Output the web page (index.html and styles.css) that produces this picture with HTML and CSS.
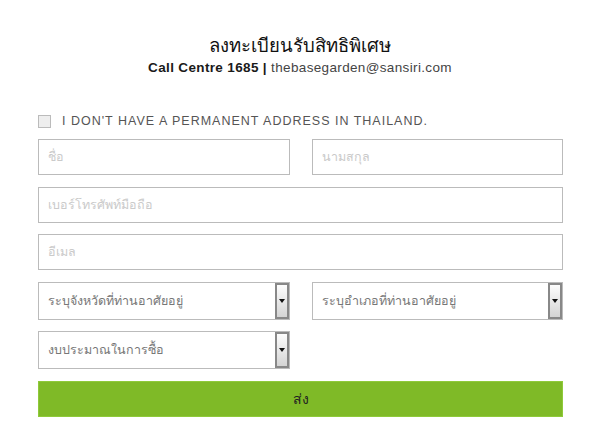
FILE: index.html
```html
<!DOCTYPE html>
<html lang="th">
<head>
<meta charset="utf-8">
<link rel="stylesheet" href="styles.css">
</head>
<body>
<div class="page">
  <header class="head">
    <h1 class="title">ลงทะเบียนรับสิทธิพิเศษ</h1>
    <p class="sub"><span class="call">Call Centre 1685 |</span> <span class="mail">thebasegarden@sansiri.com</span></p>
  </header>
  <form class="form">
    <label class="check"><span class="box"></span><span class="check-text">I DON'T HAVE A PERMANENT ADDRESS IN THAILAND.</span></label>
    <div class="row two">
      <div class="field"><span class="ph">ชื่อ</span></div>
      <div class="field"><span class="ph">นามสกุล</span></div>
    </div>
    <div class="row">
      <div class="field"><span class="ph">เบอร์โทรศัพท์มือถือ</span></div>
    </div>
    <div class="row">
      <div class="field"><span class="ph">อีเมล</span></div>
    </div>
    <div class="row two">
      <div class="select"><span class="sel-text">ระบุจังหวัดที่ท่านอาศัยอยู่</span><span class="arrow"><span class="tri"></span></span></div>
      <div class="select"><span class="sel-text">ระบุอำเภอที่ท่านอาศัยอยู่</span><span class="arrow"><span class="tri"></span></span></div>
    </div>
    <div class="row two">
      <div class="select"><span class="sel-text">งบประมาณในการซื้อ</span><span class="arrow"><span class="tri"></span></span></div>
      <div></div>
    </div>
    <div class="btn">ส่ง</div>
  </form>
</div>
</body>
</html>
```

FILE: styles.css
```css
html, body { margin: 0; padding: 0; background: #fff; }
body { font-family: "Liberation Sans", "Noto Sans", sans-serif; color: #222; }
.page { width: 600px; }
.head { text-align: center; padding-top: 34px; }
.title { margin: 0; font-size: 18.5px; font-weight: normal; line-height: 24px; color: #111; }
.sub { margin: 2px 0 0; font-size: 13.5px; line-height: 16px; letter-spacing: 0.35px; }
.call { color: #1a1a1a; font-weight: bold; }
.mail { color: #444; }
.form { width: 525px; margin: 37px 0 0 38px; display: flex; flex-direction: column; }
.check { display: flex; align-items: center; height: 16px; margin-bottom: 10px; }
.box { width: 11px; height: 11px; border: 1px solid #bbb; background: #eee; box-sizing: content-box; }
.check-text { margin-left: 11px; font-size: 12.5px; color: #555; letter-spacing: 1px; }
.row { display: grid; grid-template-columns: 1fr; margin-bottom: 11.5px; }
.row.two { grid-template-columns: 1fr 1fr; column-gap: 22px; }
.field { height: 36px; border: 1px solid #bbb; box-sizing: border-box; display: flex; align-items: center; padding-left: 9px; }
.ph { font-size: 12.5px; color: #cacaca; }
.select { height: 38px; border: 1px solid #bbb; box-sizing: border-box; display: flex; align-items: center; padding-left: 9px; }
.sel-text { flex: 1; font-size: 12.5px; color: #777; }
.arrow { width: 14px; height: 36px; box-sizing: border-box; border: 2px solid #888; background: linear-gradient(#fdfdfd, #d4d4d4); display: flex; align-items: center; justify-content: center; }
.tri { width: 0; height: 0; border-left: 3px solid transparent; border-right: 3px solid transparent; border-top: 4px solid #111; }
.btn { height: 36px; background: #7fba27; border: 1px solid #8fca3a; box-sizing: border-box; display: flex; align-items: center; justify-content: center; font-size: 14px; color: #222; }
```
